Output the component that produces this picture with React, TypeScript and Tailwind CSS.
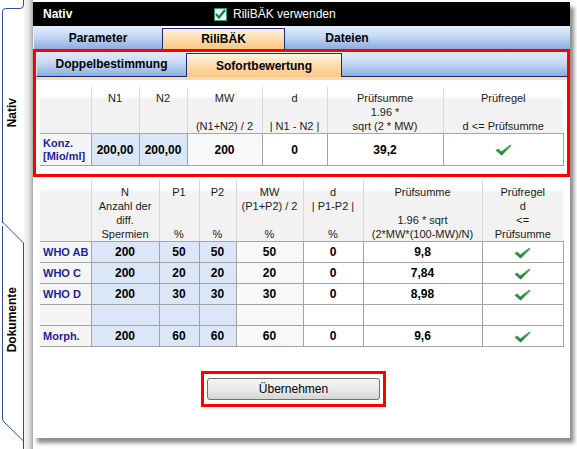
import React from "react";

const F = "font-['Liberation_Sans',Arial,Helvetica,sans-serif]";
const BLUE = "bg-[linear-gradient(to_bottom,#e3edfb_0%,#c5d9f4_45%,#8aaddf_100%)]";
const ORANGE = "bg-[linear-gradient(to_bottom,#fff3e0_0%,#fddcae_50%,#fbc783_100%)]";

function Check() {
  return (
    <svg width="17" height="12" viewBox="0 0 17 12" className="inline-block align-middle">
      <defs>
        <linearGradient id="ck" x1="0" y1="0" x2="0" y2="1">
          <stop offset="0" stopColor="#52b85c" />
          <stop offset="1" stopColor="#1d7a2b" />
        </linearGradient>
      </defs>
      <path d="M0.5 6.3 L3.2 4.6 L6.3 7.4 L15.3 0.4 L16.6 1.7 L6.6 11.6 Z" fill="url(#ck)" />
    </svg>
  );
}

function HCell({ lines, first, t2 }: { lines: string[]; first?: boolean; t2?: boolean }) {
  const cls = [
    "align-top p-0 font-normal text-[11px] leading-[14px] text-[#1c1c1c] text-center border-b border-b-[#a6a6a6] bg-[linear-gradient(to_bottom,#ffffff_0px,#ffffff_9px,#f2f2f2_12px)]",
    first ? "" : "border-l border-l-[#d9d9d9]",
    t2 ? "pt-[5px]" : "pt-[4px]",
  ].join(" ");
  return (
    <th className={cls}>
      {lines.map((l, i) => (
        <div key={i} className="h-[14px] whitespace-nowrap">
          {l || "\u00a0"}
        </div>
      ))}
    </th>
  );
}

type Kind = "lab" | "blue" | "mw" | "w";

function DCell({ v, kind, h32 }: { v: React.ReactNode; kind: Kind; h32?: boolean }) {
  const bg =
    kind === "lab"
      ? "bg-[#f5f5f5]"
      : kind === "blue"
      ? "bg-[#dbe7f7]"
      : kind === "mw"
      ? "bg-[#f8f8f8]"
      : "bg-white";
  const base = kind === "lab"
    ? "border-y border-r border-[#a3a3a3] text-left pl-[3px] pr-0 font-bold text-[11px] leading-[13px] text-[#1f1f9c]"
    : "border border-[#a3a3a3] text-center p-0 font-bold text-[12px] text-black";
  const h = h32 ? "h-[32px]" : "h-[21px]";
  return <td className={`${base} ${bg} ${h}`}>{v}</td>;
}

function LeftTabs() {
  return (
    <div className="relative w-[33px] h-full flex bg-[linear-gradient(to_right,#ffffff_0px,#ffffff_23px,#f1f1f1_25px,#e4e4e4_29px,#a9a9a9_33px)]">
      <div className="w-[24px] flex flex-col bg-white">
        <div className="h-[222px] pt-[8px] pb-[4px] flex items-center justify-center">
          <span className="[writing-mode:vertical-rl] rotate-180 text-[12px] font-bold text-black">Nativ</span>
        </div>
        <div className="h-[227px] pb-[31px] flex items-center justify-center">
          <span className="[writing-mode:vertical-rl] rotate-180 text-[12px] font-bold text-black">Dokumente</span>
        </div>
      </div>
      <svg className="absolute inset-0 pointer-events-none" width="33" height="449" viewBox="0 0 33 449">
        <path d="M23.5 0 V5 Q23.5 8.5 20 8.5 H5.5 Q2.5 8.5 2.5 11.5 V223" stroke="#2d4c9c" fill="none" strokeWidth="1" />
        <path d="M2.5 222 L23.5 243 V449" stroke="#2d4c9c" fill="none" strokeWidth="1" />
        <path d="M2.5 226 V418 Q2.5 421 5 423 L23.5 441" stroke="#2d4c9c" fill="none" strokeWidth="1" />
      </svg>
    </div>
  );
}

export default function App() {
  const rows2: { l: string; v: React.ReactNode[] }[] = [
    { l: "WHO AB", v: ["200", "50", "50", "50", "0", "9,8", <Check />] },
    { l: "WHO C", v: ["200", "20", "20", "20", "0", "7,84", <Check />] },
    { l: "WHO D", v: ["200", "30", "30", "30", "0", "8,98", <Check />] },
    { l: "", v: ["", "", "", "", "", "", ""] },
    { l: "Morph.", v: ["200", "60", "60", "60", "0", "9,6", <Check />] },
  ];
  const kinds2: Kind[] = ["blue", "blue", "blue", "mw", "w", "w", "w"];

  return (
    <div className={`${F} w-[577px] h-[449px] bg-white flex overflow-hidden`}>
      <LeftTabs />
      <div className="w-[537px] h-[436px] mt-[2px] bg-white flex flex-col shadow-[4px_5px_4px_rgba(0,0,0,0.45)]">
        {/* black header */}
        <div className="h-[24px] bg-black flex items-center text-white text-[12px]">
          <div className="w-[181px] pl-[10px] font-bold">Nativ</div>
          <div className="w-[13px] h-[13px] border border-[#2e9a73] bg-[linear-gradient(to_bottom,#dff5ea,#ffffff)] flex items-center justify-center">
            <svg width="11" height="10" viewBox="0 0 11 10">
              <path d="M1 5 L4 8.5 L10 1" stroke="#1f7d3a" strokeWidth="2.2" fill="none" />
            </svg>
          </div>
          <span className="ml-[6px]">RiliBÄK verwenden</span>
        </div>

        {/* main tabs */}
        <div className="h-[23px] flex text-[12px] font-bold text-black">
          <div className={`w-[129px] ${BLUE} border-l border-[#eef3fb] flex items-center justify-center`}>Parameter</div>
          <div className={`w-[123px] mt-[2px] ${ORANGE} border border-b-0 border-[#1b2a80] flex items-center justify-center`}>RiliBÄK</div>
          <div className={`w-[124px] ${BLUE} flex items-center justify-center`}>Dateien</div>
          <div className={`flex-1 ${BLUE}`} />
        </div>

        {/* red box */}
        <div className="border-[3px] border-[#ff0000] flex flex-col">
          <div className="h-[25px] flex text-[12px] font-bold text-black">
            <div className={`w-[150px] ${BLUE} border-l border-l-[#eef3fb] border-b border-b-[#1b2a80] flex items-center justify-center`}>Doppelbestimmung</div>
            <div className={`w-[156px] mt-[1px] ${ORANGE} border border-b-0 border-[#1b2a80] flex items-center justify-center`}>Sofortbewertung</div>
            <div className={`flex-1 ${BLUE} border-b border-b-[#1b2a80]`} />
          </div>
          <div className="h-[3px] bg-[#fcd9a9]" />
          <div className="px-[4px] pt-[7px] pb-[8px]">
            <table className="table-fixed border-collapse w-[523px]">
              <colgroup>
                <col className="w-[51px]" />
                <col className="w-[48px]" />
                <col className="w-[48px]" />
                <col className="w-[75px]" />
                <col className="w-[65px]" />
                <col className="w-[116px]" />
                <col className="w-[120px]" />
              </colgroup>
              <thead>
                <tr>
                  <HCell first lines={["", "", ""]} />
                  <HCell lines={["N1", "", ""]} />
                  <HCell lines={["N2", "", ""]} />
                  <HCell lines={["MW", "", "(N1+N2) / 2"]} />
                  <HCell lines={["d", "", "| N1 - N2 |"]} />
                  <HCell lines={["Prüfsumme", "1.96 *", "sqrt (2 * MW)"]} />
                  <HCell lines={["Prüfregel", "", "d <= Prüfsumme"]} />
                </tr>
              </thead>
              <tbody>
                <tr>
                  <DCell h32 kind="lab" v={<>Konz.<br />[Mio/ml]</>} />
                  <DCell h32 kind="blue" v="200,00" />
                  <DCell h32 kind="blue" v="200,00" />
                  <DCell h32 kind="mw" v="200" />
                  <DCell h32 kind="w" v="0" />
                  <DCell h32 kind="w" v="39,2" />
                  <DCell h32 kind="w" v={<Check />} />
                </tr>
              </tbody>
            </table>
          </div>
        </div>

        {/* second table */}
        <div className="px-[7px] pt-[3px]">
          <table className="table-fixed border-collapse w-[523px]">
            <colgroup>
              <col className="w-[51px]" />
              <col className="w-[68px]" />
              <col className="w-[40px]" />
              <col className="w-[37px]" />
              <col className="w-[67px]" />
              <col className="w-[60px]" />
              <col className="w-[119px]" />
              <col className="w-[81px]" />
            </colgroup>
            <thead>
              <tr>
                <HCell t2 first lines={["", "", "", ""]} />
                <HCell t2 lines={["N", "Anzahl der", "diff.", "Spermien"]} />
                <HCell t2 lines={["P1", "", "", "%"]} />
                <HCell t2 lines={["P2", "", "", "%"]} />
                <HCell t2 lines={["MW", "(P1+P2) / 2", "", "%"]} />
                <HCell t2 lines={["d", "| P1-P2 |", "", "%"]} />
                <HCell t2 lines={["Prüfsumme", "", "1.96 * sqrt", "(2*MW*(100-MW)/N)"]} />
                <HCell t2 lines={["Prüfregel", "d", "<=", "Prüfsumme"]} />
              </tr>
            </thead>
            <tbody>
              {rows2.map((r, i) => (
                <tr key={i}>
                  <DCell kind="lab" v={r.l} />
                  {r.v.map((v, j) => (
                    <DCell key={j} kind={kinds2[j]} v={v} />
                  ))}
                </tr>
              ))}
            </tbody>
          </table>
        </div>

        {/* button */}
        <div className="mt-[24px] ml-[168px] w-[185px] h-[36px] border-[3px] border-[#ff0000] px-[3px] py-[4px]">
          <div className="w-[173px] h-[22px] rounded-[3px] border border-[#707070] bg-[linear-gradient(to_bottom,#f4f4f4_0%,#ebebeb_50%,#d5d5d5_100%)] flex items-center justify-center text-[12px] text-black">
            Übernehmen
          </div>
        </div>
      </div>
    </div>
  );
}
